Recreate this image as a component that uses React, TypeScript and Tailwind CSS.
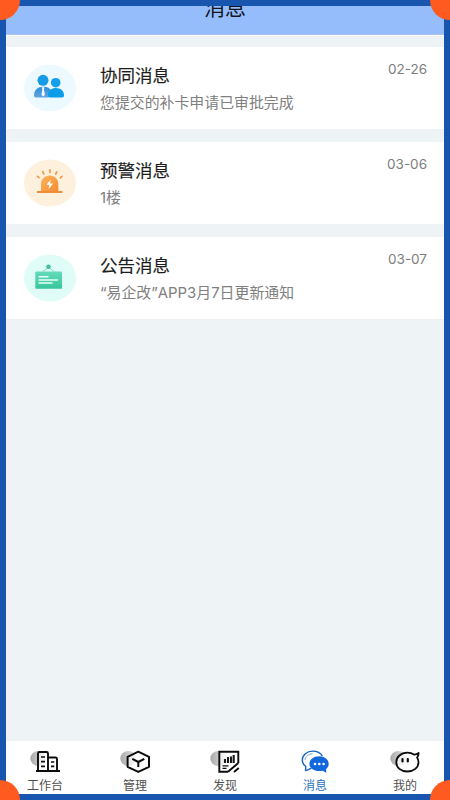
import type { ReactNode } from 'react';

type Message = {
  title: string;
  text: string;
  date: string;
  icon: ReactNode;
};

type Tab = {
  label: string;
  active?: boolean;
  icon: ReactNode;
};

function TeamIcon() {
  return (
    <svg width="52" height="48" viewBox="0 0 52 48">
      <defs>
        <linearGradient id="team" x1="0" y1="0" x2="0" y2="1">
          <stop offset="0" stopColor="#2f8fdc" />
          <stop offset="1" stopColor="#5fa4e4" />
        </linearGradient>
      </defs>
      <ellipse cx="26" cy="24" rx="26" ry="23.5" fill="#ecf9ff" />
      <circle cx="19" cy="16.3" r="5.5" fill="#159be6" />
      <path d="M10 31c0-5 4-8.3 9-8.3s7.500 2 8.500 4.300l-3 6.500H12c-1.500 0-2-.8-2-2.500z" fill="url(#team)" />
      <path d="M17.600 23.200h3l-.7 2 1 5.500-1.700 1.700-1.700-1.700.9-5.500z" fill="#fff" />
      <circle cx="31.700" cy="18.700" r="4.800" fill="#139fe9" />
      <path d="M24 31c0-4.500 3.500-7 8-7s8 2.800 8 7c0 1.800-.7 2.500-2 2.500H26c-1.500 0-2-.7-2-2.500z" fill="#0b9de8" />
    </svg>
  );
}

function AlarmIcon() {
  return (
    <svg width="52" height="48" viewBox="0 0 52 48">
      <defs>
        <linearGradient id="alarm" x1="0" y1="0" x2="1" y2="1">
          <stop offset="0" stopColor="#ffb45c" />
          <stop offset="1" stopColor="#f28b32" />
        </linearGradient>
      </defs>
      <ellipse cx="26" cy="24" rx="26" ry="23.500" fill="#fdf0dc" />
      <path d="M17 33v-8c0-5 4-8.500 8.700-8.500S34.300 20 34.300 25v8z" fill="url(#alarm)" />
      <path d="M13.700 33h24" stroke="#ee8e3c" strokeWidth="2" strokeLinecap="round" />
      <path
        d="M13.500 17.300l1.500 1.400M18.800 12.600l1 2.400M26 10.800v2.600M32.700 12.800l-1 2.300M38 17.300l-1.700 1.500"
        stroke="#f19a46"
        strokeWidth="1.700"
        strokeLinecap="round"
      />
      <path d="M26.800 20.500l-4.300 5.200h2.800l-.8 4.500 4.500-5.700h-2.900z" fill="#fff" />
    </svg>
  );
}

function NoticeIcon() {
  return (
    <svg width="52" height="48" viewBox="0 0 52 48">
      <defs>
        <linearGradient id="notice" x1="0" y1="0" x2="0" y2="1">
          <stop offset="0" stopColor="#64dab8" />
          <stop offset="1" stopColor="#38c59d" />
        </linearGradient>
      </defs>
      <ellipse cx="26" cy="24" rx="26" ry="23.500" fill="#e0fcf6" />
      <path d="M18.500 18l6-5 6 5" fill="none" stroke="#7fd8c1" strokeWidth="1" />
      <circle cx="24.500" cy="12.800" r="2.300" fill="#43bf9d" />
      <rect x="11.300" y="17.600" width="26.700" height="17.200" rx="1" fill="url(#notice)" />
      <path
        d="M15 22.800h9M15 25.900h18.500M15 29h13"
        stroke="#e6fff7"
        strokeWidth="1.500"
        strokeLinecap="round"
      />
    </svg>
  );
}

// Grey disc that sits behind every inactive tab icon
function Shade({ id }: { id: string }) {
  return (
    <>
      <defs>
        <linearGradient id={id} x1="0" y1="0" x2="1" y2="0">
          <stop offset="0" stopColor="#a9a9a9" />
          <stop offset="1" stopColor="#e6e6e6" />
        </linearGradient>
      </defs>
      <ellipse cx="8.300" cy="8.500" rx="8" ry="7.500" fill={`url(#${id})`} />
    </>
  );
}

const messages: Message[] = [
  { title: '协同消息', text: '您提交的补卡申请已审批完成', date: '02-26', icon: <TeamIcon /> },
  { title: '预警消息', text: '1楼', date: '03-06', icon: <AlarmIcon /> },
  { title: '公告消息', text: '“易企改”APP3月7日更新通知', date: '03-07', icon: <NoticeIcon /> },
];

const tabs: Tab[] = [
  {
    label: '工作台',
    icon: (
      <svg width="30" height="24" viewBox="0 0 30 24" fill="none">
        <Shade id="s1" />
        <path d="M8 21V3.500Q8 2 9.500 2h7Q18 2 18 3.500V21z" fill="#fff" fillOpacity=".6" />
        <path
          d="M6 21h24M8 21V3.500Q8 2 9.500 2h7Q18 2 18 3.500V21M18 7.500h7.500Q27 7.500 27 9v12"
          stroke="#0c0c0c"
          strokeWidth="1.900"
        />
        <path d="M11 7h4M11 11.700h4M11 16.400h4M21 12h3.300M21 16.400h3.300" stroke="#0c0c0c" strokeWidth="1.700" />
      </svg>
    ),
  },
  {
    label: '管理',
    icon: (
      <svg width="30" height="24" viewBox="0 0 30 24" fill="none">
        <Shade id="s2" />
        <path
          d="M18.300 1.700l10.700 5.100v10l-10.700 5.100L7.600 16.800v-10z"
          fill="#fff"
          fillOpacity=".6"
          stroke="#0c0c0c"
          strokeWidth="2"
          strokeLinejoin="round"
        />
        <path d="M12.300 8.800l6 3.200 6-3.200M18.300 12v5" stroke="#0c0c0c" strokeWidth="2" />
      </svg>
    ),
  },
  {
    label: '发现',
    icon: (
      <svg width="30" height="24" viewBox="0 0 30 24" fill="none">
        <Shade id="s3" />
        <path d="M9.300 1.700h19v13l-8.600 6.800H9.300z" fill="#fff" fillOpacity=".6" />
        <path d="M28.300 13V1.700h-19v20H18" stroke="#0c0c0c" strokeWidth="1.900" />
        <path d="M15 13V9M18 13V7M21 13V6.500M23.700 13V5" stroke="#1a1a1a" strokeWidth="2.100" />
        <path d="M12.500 15.800h6M12.500 18.300h4" stroke="#0c0c0c" strokeWidth="1.200" />
        <path d="M18 21.700l10.300-8.700M24 22l4.800-4" stroke="#0c0c0c" strokeWidth="1.900" />
      </svg>
    ),
  },
  {
    label: '消息',
    active: true,
    icon: (
      <svg width="30" height="24" viewBox="0 0 30 24" fill="none">
        <path
          d="M5.500 20.800l.3-4.300C3.400 14.800 2.300 12.500 2.300 10c0-5 4.700-8.900 10.300-8.900 4.400 0 8.200 2.200 9.700 5M5.500 20.800l6-2.600"
          stroke="#1764bd"
          strokeWidth="1.400"
          strokeLinejoin="round"
        />
        <path d="M5 10c.3-3.500 3.400-6 7.500-6.300" stroke="#6ea5df" strokeWidth="1" />
        <path
          d="M19 6.300c5.300 0 9.700 3.200 9.700 7.500 0 2.300-1 4.100-2.700 5.400l.4 3.500-3.900-2c-1.100.3-2.200.4-3.500.4-5.300 0-9.600-3-9.600-7.300s4.300-7.500 9.600-7.500z"
          fill="#1267dc"
        />
        <circle cx="15" cy="14" r="1.300" fill="#fff" />
        <circle cx="19.300" cy="14" r="1.300" fill="#fff" />
        <circle cx="23.600" cy="14" r="1.300" fill="#fff" />
      </svg>
    ),
  },
  {
    label: '我的',
    icon: (
      <svg width="30" height="24" viewBox="0 0 30 24" fill="none">
        <Shade id="s5" />
        <path
          d="M24 4.500c1.600.2 3-.3 4.700-1.500-.1 1.800-.6 3.300-1.600 4.500.9 1.400 1.400 3 1.400 4.700 0 5.300-4.800 9.300-11.200 9.300S6.300 17.500 6.300 12.200s4.700-9.500 11-9.500c2.500 0 4.900.6 6.700 1.800z"
          fill="#fff"
          fillOpacity=".75"
          stroke="#0c0c0c"
          strokeWidth="1.800"
          strokeLinejoin="round"
        />
        <path d="M12.500 9v2.500M17.800 9v2.500" stroke="#0c0c0c" strokeWidth="2.200" strokeLinecap="round" />
      </svg>
    ),
  },
];

export default function App() {
  return (
    <div className="relative h-[800px] w-[450px] overflow-hidden bg-[#1755af] p-1.5 font-[Inter,'Noto_Sans_CJK_SC',sans-serif]">
      <div className="flex h-full flex-col overflow-hidden bg-[#eef4f5]">
        <header className="flex h-[29px] shrink-0 items-start justify-center overflow-hidden border-b border-[#a9c3ee] bg-[#96bdfb]">
          <h1 className="-mt-2.5 text-[21px] leading-6 text-[#10151f]">消息</h1>
        </header>

        <main className="flex flex-1 flex-col gap-[13.500px] border-t border-white pt-[11px]">
          {messages.map((m) => (
            <section key={m.title} className="flex h-[81.500px] shrink-0 bg-white pr-[17px] pl-[18px]">
              <div className="pt-[17px]">{m.icon}</div>
              <div className="ml-6 flex-1 pt-[17px]">
                <h2 className="text-[17.500px] leading-6 text-[#1c1c1c] [-webkit-text-stroke:0.15px_#1c1c1c]">
                  {m.title}
                </h2>
                <p className="mt-[3px] text-[14.900px] leading-6 text-[#808080]">{m.text}</p>
              </div>
              <time className="pt-3 text-[13.500px] leading-5 text-[#7d7d7d]">{m.date}</time>
            </section>
          ))}
        </main>

        <nav className="-mx-1.5 grid h-[53px] shrink-0 grid-cols-5 bg-white">
          {tabs.map((t) => (
            <button key={t.label} className="flex flex-col items-center pt-[9px]">
              {t.icon}
              <span
                className={
                  t.active ? 'mt-0.5 text-xs leading-5 text-[#2872bd]' : 'mt-0.5 text-xs leading-5 text-[#505050]'
                }
              >
                {t.label}
              </span>
            </button>
          ))}
        </nav>
      </div>

      {/* frame corners */}
      <i className="absolute -top-5 -left-5 size-10 rounded-full bg-[#ff5a1f]" />
      <i className="absolute -top-5 -right-5 size-10 rounded-full bg-[#ff5a1f]" />
      <i className="absolute -bottom-5 -left-5 size-10 rounded-full bg-[#ff5a1f]" />
      <i className="absolute -right-5 -bottom-5 size-10 rounded-full bg-[#ff5a1f]" />
    </div>
  );
}
